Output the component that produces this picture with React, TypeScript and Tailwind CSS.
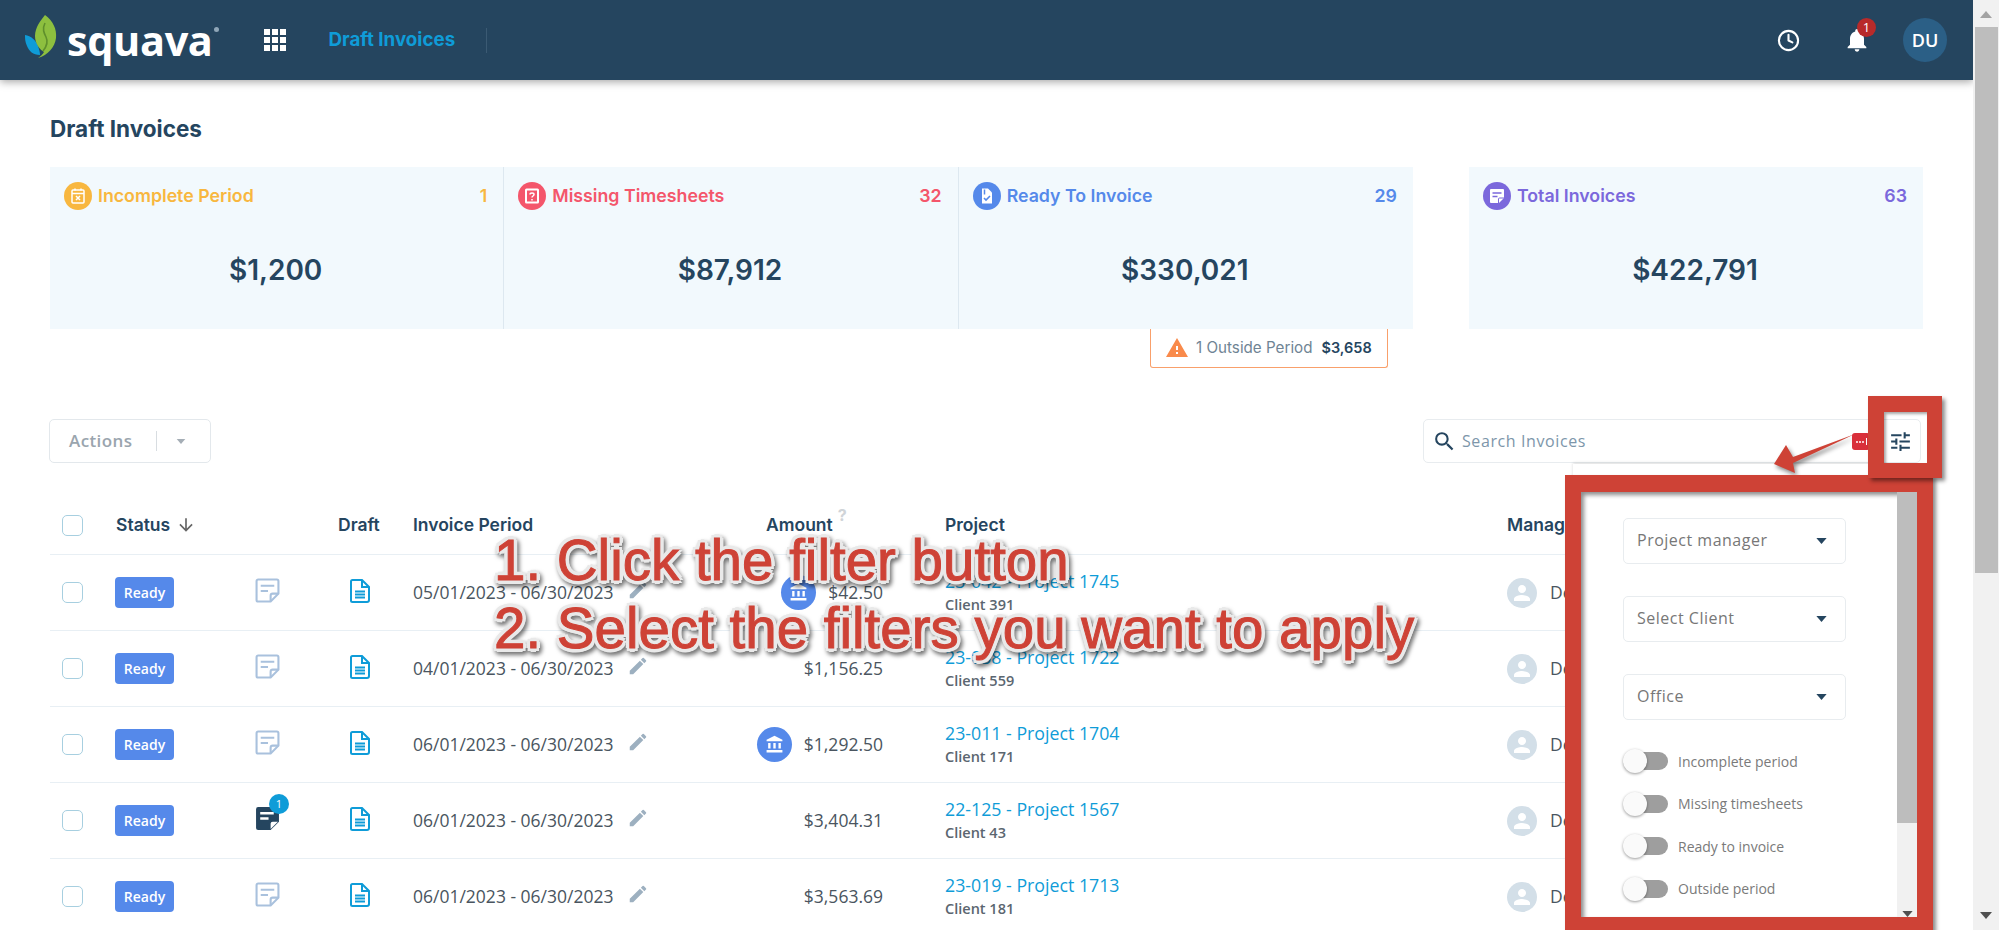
import React from "react";
import { MdNotifications, MdTune, MdSearch, MdEdit, MdAccountBalance, MdWarning, MdPerson, MdArrowDownward } from "react-icons/md";
import { Clock } from "lucide-react";

const Caret = ({ cls }: { cls: string }) => (
  <svg viewBox="0 0 12 7" className={cls}><path d="M0 0h12L6 7z" fill="currentColor" /></svg>
);

const Logo = () => (
  <div className="flex items-center">
    <svg width="34" height="46" viewBox="0 0 34 46" className="ml-[24px] mt-[-6px] shrink-0">
      <path d="M1 21c6 1 11 5 13 11 1 3 2 6 2 9-7 0-11-4-13-9-2-4-2-8-2-11z" fill="#0f9cd8" />
      <path d="M21 1c8 6 12 14 11 23-1 9-8 17-18 20 3-2 5-4 6-6-5-3-9-9-9-16 0-9 6-16 10-21z" fill="#8dbf3f" />
      <path d="M21 9c-3 6-1 10 1 14s1 9-3 14" fill="none" stroke="#5f8f2c" strokeWidth="1.6" />
    </svg>
    <span className="ml-[9px] mt-[2px] text-[41.500px] leading-none font-bold text-white font-['Open_Sans',sans-serif] tracking-[-0.4px]">squava</span>
    <span className="mb-[22px] ml-[1px] w-[5px] h-[5px] rounded-full bg-[#8fa6b8]" />
  </div>
);

const GridIcon = () => (
  <div className="grid grid-cols-3 gap-[2px] w-[22px] h-[22px]">
    {Array.from({ length: 9 }).map((_, i) => <span key={i} className="bg-white w-[6px] h-[6px]" />)}
  </div>
);

const NoteIcon = ({ dark }: { dark?: boolean }) => dark ? (
  <svg width="25" height="25" viewBox="0 0 24 24">
    <path d="M3 1h18a2 2 0 0 1 2 2v12l-8 8H3a2 2 0 0 1-2-2V3a2 2 0 0 1 2-2z" fill="#25455f" />
    <path d="M5 7h13M5 12h8" stroke="#fff" strokeWidth="2.4" />
    <path d="M15 22v-5a2 2 0 0 1 2-2h5z" fill="#fff" />
  </svg>
) : (
  <svg width="25" height="25" viewBox="0 0 24 24" fill="none" stroke="#a9c1dd" strokeWidth="2">
    <path d="M3 1.5h18A1.5 1.5 0 0 1 22.500 3v12L15 22.500H3A1.500 1.500 0 0 1 1.500 21V3A1.500 1.500 0 0 1 3 1.500z" />
    <path d="M5.500 7.500h13M5.500 12.500h7" />
    <path d="M15 22v-5a2 2 0 0 1 2-2h5.500" />
  </svg>
);

const DraftIcon = () => (
  <svg width="20" height="24" viewBox="0 0 20 24" fill="none" stroke="#0f9cd8" strokeWidth="2">
    <path d="M2.500 1h9.500l7 7v13a2 2 0 0 1-2 2H2.500a1.500 1.500 0 0 1-1.500-1.500v-19A1.500 1.500 0 0 1 2.500 1z" />
    <path d="M12 1v7h7" />
    <path d="M5 12.500h10M5 15.500h10M5 18.500h10" strokeWidth="1.800" />
  </svg>
);

const CardIcon = ({ kind, bg }: { kind: string; bg: string }) => (
  <span className={"w-[28px] h-[28px] rounded-full flex items-center justify-center shrink-0 " + bg}>
    <svg width="18" height="18" viewBox="0 0 18 18" fill="none" stroke="#fff" strokeWidth="1.500">
      {kind === "cal" && <><rect x="3" y="3" width="12" height="13" rx="1" /><path d="M3 6.500h12M6 1.500v2M12 1.500v2M7 9l4 4M11 9l-4 4" /></>}
      {kind === "q" && <><rect x="3" y="2.500" width="12" height="13" rx="0.500" strokeWidth="2" /><path d="M7 7.500c0-2 4-2 4 0 0 1.500-2 1.500-2 3M9 12v1.500" /></>}
      {kind === "doc" && <><path d="M4 1.500h6l4 4v11H4z" fill="#fff" stroke="none" /><path d="M6.500 2.500v5" stroke="#5589ea" /><path d="M6 11l2 2 4-4" stroke="#5589ea" strokeWidth="1.600" /></>}
      {kind === "note" && <><path d="M3 2h12a1 1 0 0 1 1 1v8l-5 5H3a1 1 0 0 1-1-1V3a1 1 0 0 1 1-1z" fill="#fff" stroke="none" /><path d="M4.500 6h9M4.500 9.500h5" stroke="#7b68dc" strokeWidth="1.700" /><path d="M10.500 16v-4a1 1 0 0 1 1-1H16" stroke="#7b68dc" strokeWidth="1" /></>}
    </svg>
  </span>
);

const Card = ({ kind, bg, text, title, count, value, divider, width }: { kind: string; bg: string; text: string; title: string; count: string; value: string; divider?: boolean; width: string }) => (
  <div className={width + " h-[162px] bg-[#f2f9fd] flex flex-col pl-[14px] pr-[16px] pt-[15px] " + (divider ? "border-r border-[#dde8f0]" : "")}>
    <div className={"flex items-center h-[28px] font-semibold text-[17.750px] " + text}>
      <CardIcon kind={kind} bg={bg} />
      <span className="ml-[6px]">{title}</span>
      <span className="ml-auto">{count}</span>
    </div>
    <div className="text-center text-[28px] font-semibold text-[#25455f] mt-[40px] leading-[40px]">{value}</div>
  </div>
);

const rows = [
  { period: "05/01/2023 - 06/30/2023", amount: "$42.50", bank: true, project: "23-042 - Project 1745", client: "Client 391" },
  { period: "04/01/2023 - 06/30/2023", amount: "$1,156.25", project: "23-038 - Project 1722", client: "Client 559" },
  { period: "06/01/2023 - 06/30/2023", amount: "$1,292.50", bank: true, project: "23-011 - Project 1704", client: "Client 171" },
  { period: "06/01/2023 - 06/30/2023", amount: "$3,404.31", note: true, project: "22-125 - Project 1567", client: "Client 43" },
  { period: "06/01/2023 - 06/30/2023", amount: "$3,563.69", project: "23-019 - Project 1713", client: "Client 181" },
];

const cols = "grid grid-cols-[66px_139px_83px_75px_337px_133px_62px_562px_1fr]";
const Check = () => <span className="block w-[21px] h-[21px] ml-[12px] rounded-[5px] border border-[#a7cfe0] bg-white" />;

const Select = ({ label }: { label: string }) => (
  <div className="h-[46px] w-[223px] rounded-[5px] border border-[#e8ecef] flex items-center pl-[13px] pr-[18px] text-[16px] text-[#777] tracking-[0.5px]">
    <span className="mb-[2px]">{label}</span>
    <Caret cls="ml-auto w-[11px] h-[6px] text-[#25455f]" />
  </div>
);

const Toggle = ({ label }: { label: string }) => (
  <div className="h-[26px] flex items-center">
    <span className="relative block w-[45px] h-[26px] shrink-0">
      <span className="absolute left-[12px] top-[4px] w-[33px] h-[18px] rounded-full bg-[#9e9e9e]" />
      <span className="absolute left-0 top-[1px] w-[24px] h-[24px] rounded-full bg-[#fafafa] shadow-[0_1px_3px_rgba(0,0,0,0.4)]" />
    </span>
    <span className="ml-[10px] text-[14px] text-[#7a7a7a]">{label}</span>
  </div>
);

export default function App() {
  return (
    <div className="relative flex w-[1999px] h-[930px] overflow-hidden bg-white text-[#25455f] font-['Open_Sans',sans-serif]">
      <div className="w-[1973px] shrink-0">
        <header className="h-[80px] bg-[#25455f] flex items-center shadow-[0_2px_8px_rgba(0,0,0,0.35)] relative">
          <Logo />
          <div className="ml-[45px]"><GridIcon /></div>
          <span className="ml-[43px] text-[18.750px] font-bold text-[#0f9cd8] font-['Inter',sans-serif]">Draft Invoices</span>
          <span className="ml-[31px] w-px h-[25px] bg-[#3b5a73]" />
          <div className="ml-auto flex items-center text-white">
            <Clock size={23} strokeWidth={2.2} />
            <span className="relative ml-[43px]">
              <MdNotifications size={28} />
              <span className="absolute left-[14px] top-[-8px] w-[19px] h-[19px] rounded-full bg-[#b82a2a] text-[13px] leading-[19px] text-center">1</span>
            </span>
            <span className="ml-[32px] mr-[26px] w-[44px] h-[44px] rounded-full bg-[#2b5f86] flex items-center justify-center text-[18px] font-semibold">DU</span>
          </div>
        </header>

        <main className="px-[50px] font-['Inter',sans-serif]">
          <h1 className="pt-[36px] text-[22.500px] leading-[26px] font-bold">Draft Invoices</h1>
          <div className="mt-[25px] flex">
            <Card width="w-[455px]" kind="cal" bg="bg-[#f8b73f]" text="text-[#f8b73f]" title="Incomplete Period" count="1" value="$1,200" divider />
            <Card width="w-[455px]" kind="q" bg="bg-[#f4566b]" text="text-[#f4566b]" title="Missing Timesheets" count="32" value="$87,912" divider />
            <Card width="w-[455px]" kind="doc" bg="bg-[#5589ea]" text="text-[#5589ea]" title="Ready To Invoice" count="29" value="$330,021" />
            <div className="ml-[56px]">
              <Card width="w-[454px]" kind="note" bg="bg-[#7b68dc]" text="text-[#7b68dc]" title="Total Invoices" count="63" value="$422,791" />
            </div>
          </div>
          <div className="ml-[1100px] w-[238px] h-[39px] border border-t-0 border-[#f9a06b] rounded-b-[3px] flex items-center pl-[14px] text-[15.200px]">
            <MdWarning size={24} className="text-[#f98a4b]" />
            <span className="ml-[7px] text-[#6f8494]">1 Outside Period</span>
            <span className="ml-[9px] font-semibold text-[14.500px]">$3,658</span>
          </div>

          <div className="mt-[51px] h-[44px] flex justify-between font-['Open_Sans',sans-serif]">
            <div className="w-[162px] ml-[-1px] h-[44px] border border-[#e3e8ec] rounded-[5px] flex items-center pl-[19px] text-[17px] tracking-[0.4px] font-semibold text-[#9aa5ae]">
              <span>Actions</span>
              <span className="ml-[24px] w-px h-[20px] bg-[#d8dde1]" />
              <Caret cls="ml-[19px] w-[10px] h-[5px] text-[#a5aeb6]" />
            </div>
            <div className="w-[498px] mr-[2px] h-[44px] border border-[#e8ecef] rounded-[5px] flex items-center pl-[8px] pr-[7px]">
              <MdSearch size={25} className="text-[#25455f]" />
              <span className="ml-[5px] text-[16px] text-[#7d96aa] tracking-[0.6px]">Search Invoices</span>
              <MdTune size={25} className="ml-auto text-[#25455f]" />
            </div>
          </div>

          <div className={cols + " h-[92px] items-center border-b border-[#e8eff4] text-[17.500px] font-semibold pt-[33px]"}>
            <Check />
            <div className="flex items-center gap-[6px]"><span>Status</span><MdArrowDownward size={20} className="text-[#666]" /></div>
            <div />
            <div>Draft</div>
            <div>Invoice Period</div>
            <div className="pl-[16px] flex"><span>Amount</span><span className="ml-[5px] mt-[-9px] text-[16px] font-bold text-[#d0d4d8]">?</span></div>
            <div />
            <div>Project</div>
            <div>Manager</div>
          </div>

          {rows.map((r, i) => (
            <div key={i} className={cols + " h-[76px] items-center border-b border-[#e8eff4] font-['Open_Sans',sans-serif] text-[17.500px] text-[#4a5560]"}>
              <Check />
              <div className="ml-[-1px]"><span className="inline-block w-[59px] h-[31px] rounded-[4px] bg-[#5589ea] text-white text-[14px] font-semibold leading-[31px] text-center">Ready</span></div>
              <div>
                <span className="relative block w-[25px] mt-[-4px]">
                  <NoteIcon dark={r.note} />
                  {r.note && <span className="absolute left-[14px] top-[-12px] w-[20px] h-[20px] rounded-full bg-[#0f9cd8] text-white text-[11px] leading-[20px] text-center">1</span>}
                </span>
              </div>
              <div className="pl-[12px] mt-[-4px]"><DraftIcon /></div>
              <div className="flex items-center">
                <span>{r.period}</span>
                <MdEdit size={22} className="ml-[13px] mt-[-5px] text-[#9db0c0]" />
              </div>
              <div className="flex items-center justify-end gap-[12px]">
                {r.bank && <span className="w-[35px] h-[35px] rounded-full bg-[#5589ea] flex items-center justify-center shrink-0"><MdAccountBalance size={19} className="text-white" /></span>}
                <span>{r.amount}</span>
              </div>
              <div />
              <div className="mt-[-1px]">
                <div className="text-[17.750px] leading-[22px] text-[#0f9cd8]">{r.project}</div>
                <div className="text-[14.500px] leading-[18px] mt-[4px] font-semibold text-[#5b6670]">{r.client}</div>
              </div>
              <div className="flex items-center">
                <span className="w-[30px] h-[30px] rounded-full bg-[#d3dfe8] flex items-center justify-center"><MdPerson size={24} className="text-white" /></span>
                <span className="ml-[13px] text-[17.500px]">Demo User</span>
              </div>
            </div>
          ))}
        </main>
      </div>

      {/* page scrollbar */}
      <div className="w-[26px] h-[930px] bg-[#f1f1f1] flex flex-col items-center relative">
        <Caret cls="mt-[11px] w-[12px] h-[7px] rotate-180 text-[#a3a3a3]" />
        <div className="mt-[9px] w-[23px] h-[546px] bg-[#bdbdbd]" />
        <Caret cls="mt-auto mb-[11px] w-[12px] h-[7px] text-[#505050]" />
      </div>

      {/* filter panel sliver */}
      <div className="absolute left-[1573px] top-[464px] w-[300px] h-[14px] bg-white shadow-[0_-1px_3px_rgba(0,0,0,0.15)]" />

      {/* annotation arrow */}
      <svg className="absolute left-[1765px] top-[425px] drop-shadow-[2px_3px_2px_rgba(0,0,0,0.45)]" width="100" height="55" viewBox="0 0 100 55">
        <path d="M90 9L28 32 21 20 9 39 30 48 28 38z" fill="#ce4236" />
      </svg>
      <span className="absolute left-[1852px] top-[433px] w-[18px] h-[17px] rounded-[3px] bg-[#d92f3a] flex items-center justify-center gap-[1px]">
        {[0, 1, 2].map((d) => <span key={d} className="w-[2px] h-[2px] bg-white rounded-full" />)}
        <span className="ml-[1px] w-px h-[7px] bg-white" />
      </span>

      {/* filter panel, outlined */}
      <div className="absolute left-[1565px] top-[475px] w-[368px] h-[458px] border-[16px] border-t-[17px] border-[#ce4236] bg-white flex shadow-[3px_3px_4px_rgba(0,0,0,0.45),inset_3px_3px_4px_rgba(0,0,0,0.45)] font-['Open_Sans',sans-serif]">
        <div className="w-[317px] pl-[42px] pt-[26px]">
          <div className="flex flex-col gap-[32px]">
            <Select label="Project manager" />
            <Select label="Select Client" />
            <Select label="Office" />
          </div>
          <div className="mt-[28px] flex flex-col gap-[16.500px]">
            <Toggle label="Incomplete period" />
            <Toggle label="Missing timesheets" />
            <Toggle label="Ready to invoice" />
            <Toggle label="Outside period" />
          </div>
        </div>
        <div className="w-[20px] bg-[#f1f1f1] flex flex-col items-center">
          <div className="w-full h-[331px] bg-[#bdbdbd]" />
          <Caret cls="mt-auto w-[11px] h-[6px] text-[#505050]" />
        </div>
      </div>

      {/* filter button outline */}
      <div className="absolute left-[1868px] top-[396px] w-[74px] h-[82px] border-[16px] border-r-[15px] border-b-[15px] border-[#ce4236] shadow-[3px_3px_4px_rgba(0,0,0,0.45),inset_2px_2px_3px_rgba(0,0,0,0.35)]" />

      {/* annotation text */}
      <div className="absolute left-[494px] top-[527px] whitespace-pre text-[56.500px] leading-[68px] text-[#ce4236] font-['Liberation_Sans',sans-serif] [-webkit-text-stroke:1px_#ce4236] [text-shadow:4px_0_0_#e9e9e9,-4px_0_0_#e9e9e9,0_4px_0_#e9e9e9,0_-4px_0_#e9e9e9,3px_3px_0_#e9e9e9,-3px_3px_0_#e9e9e9,3px_-3px_0_#e9e9e9,-3px_-3px_0_#e9e9e9] [filter:drop-shadow(2px_3px_2px_rgba(0,0,0,0.55))]">
        <div>1. Click the filter button</div>
        <div>2. Select the filters you want to apply</div>
      </div>
    </div>
  );
}
